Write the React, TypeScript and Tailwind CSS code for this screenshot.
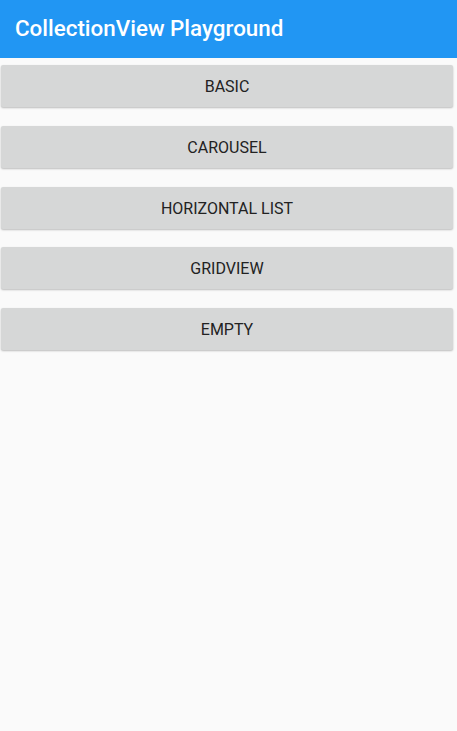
const items = ['Basic', 'Carousel', 'Horizontal List', 'GridView', 'Empty']

export default function App() {
  return (
    <div className="flex h-[731px] w-[457px] flex-col bg-[#fafafa] font-['Roboto',sans-serif]">
      <header className="flex h-[58px] items-center bg-[#2196f3] px-[15px]">
        <h1 className="text-[22.4px] font-medium text-white">CollectionView Playground</h1>
      </header>
      <div className="mt-[7px] flex flex-col gap-[18.75px] pl-[1px]">
        {items.map((item) => (
          <button
            key={item}
            className="h-[42px] w-[452px] rounded-[2px] bg-[#d6d7d7] pt-[2px] text-[16px] font-normal uppercase text-[#222] shadow-[0_1px_2px_rgba(0,0,0,0.25)]"
          >
            {item}
          </button>
        ))}
      </div>
    </div>
  )
}
